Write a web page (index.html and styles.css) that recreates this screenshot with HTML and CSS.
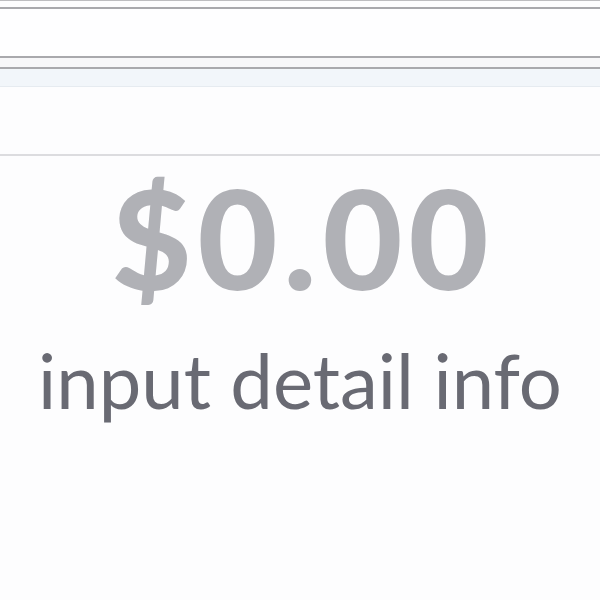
FILE: index.html
```html
<!DOCTYPE html>
<html>
<head>
<meta charset="utf-8">
<link rel="stylesheet" href="styles.css">
</head>
<body>
<div class="top-gap"></div>
<div class="field"></div>
<div class="strip"></div>
<div class="toolbar"></div>
<div class="panel"></div>
<main class="display">
  <div class="amount">$0.00</div>
  <div class="detail">input detail info</div>
</main>
</body>
</html>
```
FILE: styles.css
```css
html, body {
  margin: 0;
  padding: 0;
  background: #fdfdfe;
  height: 600px;
  overflow: hidden;
}
.top-gap {
  height: 7px;
  border-top: 1px solid #bdbdc0;
  box-sizing: border-box;
}
.field {
  height: 51px;
  border-top: 2px solid #a9a9ad;
  border-bottom: 2px solid #a9a9ad;
  box-sizing: border-box;
  background: #fefeff;
}
.strip {
  height: 9px;
  background: #f7f7f9;
}
.toolbar {
  height: 20px;
  border-top: 2px solid #a9a9ad;
  border-bottom: 1px solid #e6ebf0;
  box-sizing: border-box;
  background: #f2f6fa;
}
.panel {
  height: 67px;
  border-bottom: 2px solid #dcdcdf;
}
.display {
  display: flex;
  flex-direction: column;
  align-items: center;
}
.amount {
  font-family: Lato, "Open Sans", sans-serif;
  font-weight: 900;
  font-size: 138px;
  line-height: 1;
  color: #b0b1b6;
  margin-top: 12px;
  letter-spacing: 6px;
  padding-left: 6px;
}
.detail {
  font-family: Lato, "Noto Sans", sans-serif;
  font-weight: 400;
  font-size: 76px;
  line-height: 1;
  color: #696a73;
  margin-top: 36px;
}
```
